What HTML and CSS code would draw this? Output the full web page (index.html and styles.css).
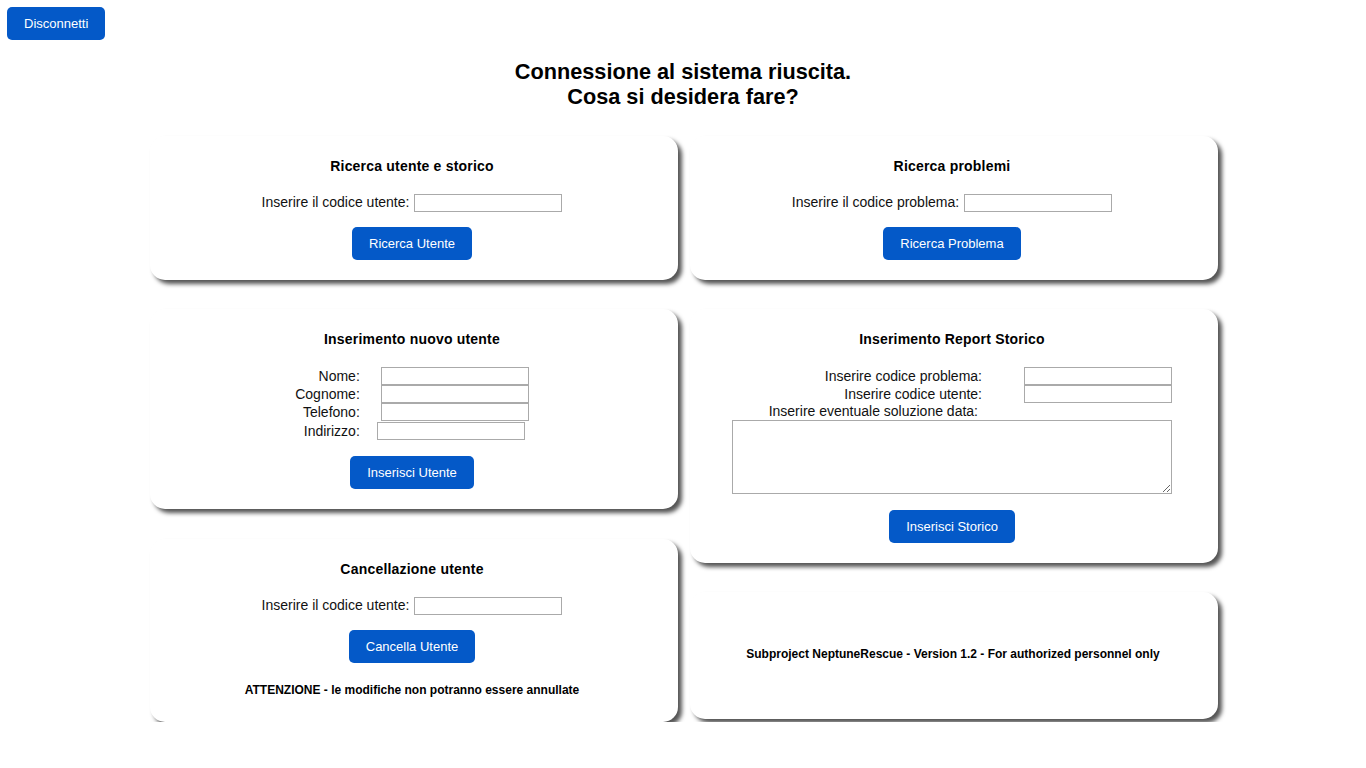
FILE: index.html
```html
<!DOCTYPE html>
<html lang="it">
<head>
<meta charset="utf-8">
<title>NeptuneRescue</title>
<link rel="stylesheet" href="styles.css">
</head>
<body>
<div class="topbar">
  <button class="btn">Disconnetti</button>
</div>
<h1 class="title">Connessione al sistema riuscita.<br>Cosa si desidera fare?</h1>
<main class="board">
  <div class="col">
    <section class="card">
      <h2 class="card-title">Ricerca utente e storico</h2>
      <div class="row">
        <label class="lbl">Inserire il codice utente:</label>
        <input class="field" type="text">
      </div>
      <button class="btn">Ricerca Utente</button>
    </section>
    <section class="card">
      <h2 class="card-title">Inserimento nuovo utente</h2>
      <div class="form-grid">
        <label class="lbl">Nome:</label><input class="field" type="text">
        <label class="lbl">Cognome:</label><input class="field" type="text">
        <label class="lbl">Telefono:</label><input class="field" type="text">
        <label class="lbl lbl-gap">Indirizzo:</label><input class="field field-shift" type="text">
      </div>
      <button class="btn btn-mt16">Inserisci Utente</button>
    </section>
    <section class="card card-delete">
      <h2 class="card-title">Cancellazione utente</h2>
      <div class="row">
        <label class="lbl">Inserire il codice utente:</label>
        <input class="field" type="text">
      </div>
      <button class="btn">Cancella Utente</button>
      <p class="note">ATTENZIONE - le modifiche non potranno essere annullate</p>
    </section>
  </div>
  <div class="col">
    <section class="card">
      <h2 class="card-title">Ricerca problemi</h2>
      <div class="row">
        <label class="lbl">Inserire il codice problema:</label>
        <input class="field" type="text">
      </div>
      <button class="btn">Ricerca Problema</button>
    </section>
    <section class="card">
      <h2 class="card-title">Inserimento Report Storico</h2>
      <div class="report">
        <div class="report-grid">
          <label class="lbl">Inserire codice problema:</label><input class="field" type="text">
          <label class="lbl">Inserire codice utente:</label><input class="field" type="text">
          <label class="lbl lbl-wide">Inserire eventuale soluzione data:</label>
        </div>
        <textarea class="area"></textarea>
      </div>
      <button class="btn btn-mt16">Inserisci Storico</button>
    </section>
    <section class="card card-info">
      <p class="note">Subproject NeptuneRescue - Version 1.2 - For authorized personnel only</p>
    </section>
  </div>
</main>
</body>
</html>
```
FILE: styles.css
```css
* { box-sizing: border-box; }

html, body {
  margin: 0;
  padding: 0;
  background: #fff;
}

body {
  font-family: "Liberation Sans", Arial, sans-serif;
  color: #000;
  padding: 7px 0 0 7px;
}

.topbar {
  display: flex;
  height: 33px;
}

.btn {
  display: inline-flex;
  align-items: center;
  justify-content: center;
  height: 33px;
  padding: 0 17px;
  border: none;
  border-radius: 5px;
  background: #0459c8;
  color: #fff;
  font-family: "Liberation Sans", Arial, sans-serif;
  font-size: 13px;
  cursor: pointer;
}

.title {
  margin: 19px 0 0 -7px;
  text-align: center;
  font-size: 21.7px;
  line-height: 25px;
  font-weight: bold;
}

.board {
  display: flex;
  justify-content: center;
  align-items: flex-start;
  gap: 12px;
  margin: 27px 0 0 -5px;
}

.col {
  width: 528px;
  display: flex;
  flex-direction: column;
  gap: 29px;
}

.card {
  background: #fff;
  border-radius: 15px;
  box-shadow: 4px 4px 4px #555;
  padding: 22px 4px 20px 0;
  display: flex;
  flex-direction: column;
  align-items: center;
}

.card-delete {
  margin-top: 1px;
  padding-bottom: 21px;
}

.card-title {
  margin: 0;
  font-size: 14px;
  line-height: 16px;
  font-weight: bold;
  letter-spacing: 0.2px;
}

.row {
  display: flex;
  align-items: center;
  gap: 5px;
  margin: 20px 0 15px;
  height: 18px;
}

.row .lbl { margin-bottom: 2px; }

.lbl {
  font-size: 14px;
  line-height: 16px;
  color: #111;
}

.field {
  width: 148px;
  height: 18px;
  border: 1px solid #aaa;
  padding: 1px 2px;
  font-size: 13px;
  background: #fff;
  margin: 0;
}

.form-grid {
  display: grid;
  grid-template-columns: auto 148px;
  column-gap: 21px;
  align-items: center;
  margin-top: 20px;
}

.form-grid .lbl { text-align: right; }

.field-shift {
  margin: 1px 0 0 -4px;
}

.lbl-gap { margin-top: 1px; }

.btn-mt16 { margin-top: 16px; }

.report {
  width: 440px;
  margin-top: 20px;
}

.report-grid {
  display: grid;
  grid-template-columns: 1fr 148px;
  column-gap: 42px;
  align-items: center;
}

.report-grid .lbl { text-align: right; }

.lbl-wide {
  padding-right: 4px;
  height: 17px;
  line-height: 17px;
}

.area {
  display: block;
  width: 440px;
  height: 74px;
  border: 1px solid #aaa;
  margin: 0;
  font-family: "Liberation Mono", monospace;
  font-size: 13px;
}

.note {
  margin: 20px 0 0;
  font-size: 12px;
  line-height: 14px;
  font-weight: bold;
  padding-bottom: 4px;
}

.card-info {
  height: 127px;
  justify-content: center;
  padding: 0 2px 3px 0;
}

.card-info .note {
  margin: 0;
  padding: 0;
}
```
